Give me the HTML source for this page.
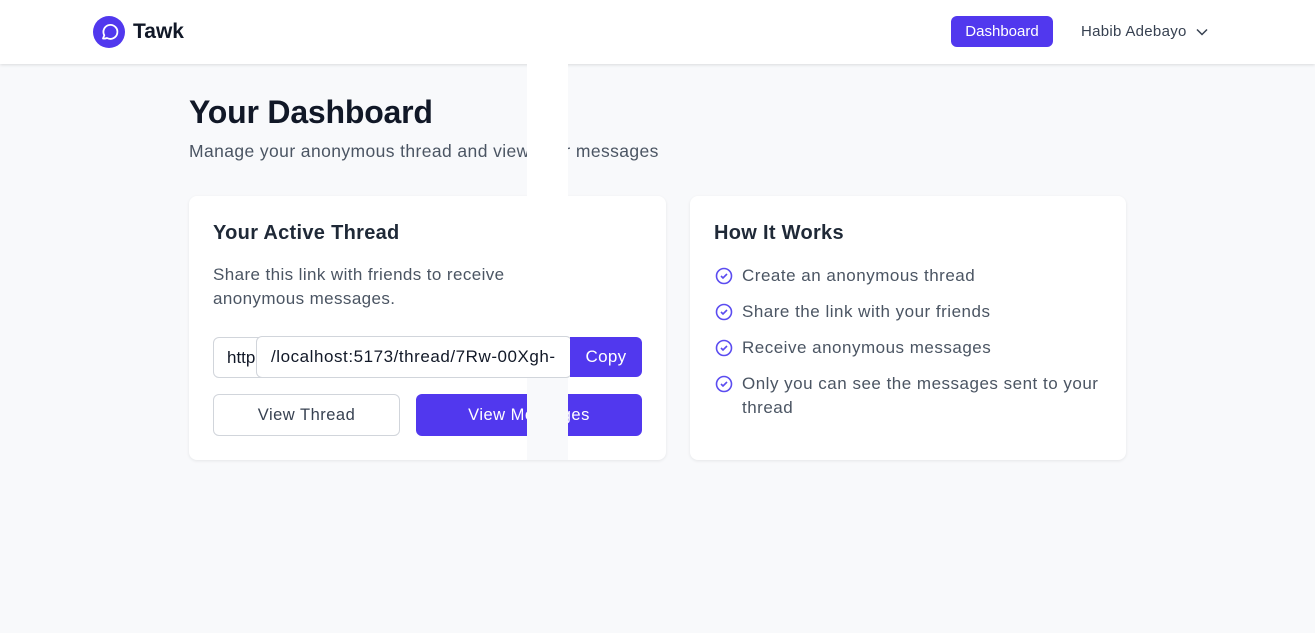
<!DOCTYPE html>
<html><head><style>
*{box-sizing:border-box;margin:0;padding:0}
body{width:1315px;height:633px;background:#f8f9fb;font-family:"Liberation Sans",sans-serif;position:relative;overflow:hidden;color:#111827}
.a{position:absolute}
.hdr{left:0;top:0;width:1315px;height:64px;background:#fff;box-shadow:0 1px 3px rgba(0,0,0,.12)}
.card{background:#fff;border-radius:8px;box-shadow:0 1px 3px rgba(0,0,0,.08)}
.btn{background:#5138ee;color:#fff;border-radius:6px;display:flex;align-items:center;justify-content:center}
.li{left:714px;font-size:17px;letter-spacing:.5px;color:#4b5563;display:flex;gap:8px;line-height:24px}
</style></head><body>
<div class="a hdr"></div>
<svg class="a" style="left:93px;top:16px" width="32" height="32" viewBox="0 0 32 32"><circle cx="16" cy="16" r="16" fill="#5138ee"/><path d="M10 22.5l1.3-3.2A7 7 0 1 1 14 22a7 7 0 0 1-4 .5z" fill="none" stroke="#fff" stroke-width="1.8" stroke-linejoin="round"/></svg>
<div class="a" style="left:133px;top:20px;font-size:21px;font-weight:bold">Tawk</div>
<div class="a btn" style="left:951px;top:16px;width:102px;height:31px;font-size:15px">Dashboard</div>
<div class="a" style="left:1081px;top:23px;font-size:15px;letter-spacing:.3px;color:#374151">Habib Adebayo</div>
<svg class="a" style="left:1196px;top:27px" width="12" height="10" viewBox="0 0 12 10"><path d="M1 2.5l5 5 5-5" fill="none" stroke="#374151" stroke-width="1.5"/></svg>
<div class="a" style="left:189px;top:94px;font-size:32px;font-weight:bold;letter-spacing:-.2px">Your Dashboard</div>
<div class="a" style="left:189px;top:141px;font-size:17.5px;letter-spacing:.4px;color:#4b5563">Manage your anonymous thread and view your messages</div>
<div class="a card" style="left:189px;top:196px;width:477px;height:264px"></div>
<div class="a card" style="left:690px;top:196px;width:436px;height:264px"></div>
<div class="a" style="left:213px;top:222px;font-size:20px;letter-spacing:.3px;font-weight:bold;color:#1f2937">Your Active Thread</div>
<div class="a" style="left:213px;top:263px;width:340px;font-size:17px;letter-spacing:.4px;line-height:24px;color:#4b5563">Share this link with friends to receive anonymous messages.</div>
<div class="a" style="left:213px;top:337px;width:60px;height:41px;border:1px solid #d1d5db;border-radius:6px;background:#fff;font-size:17px;padding:10px 0 0 13px;overflow:hidden">http</div>
<div class="a" style="left:256px;top:336px;width:316px;height:42px;border:1px solid #d1d5db;border-radius:6px;background:#fff;font-size:17px;letter-spacing:.55px;padding:10px 0 0 14px;white-space:nowrap;overflow:hidden">/localhost:5173/thread/7Rw-00Xgh-</div>
<div class="a btn" style="left:570px;top:337px;width:72px;height:40px;font-size:17px;letter-spacing:.3px;border-radius:0 6px 6px 0">Copy</div>
<div class="a" style="left:213px;top:394px;width:187px;height:42px;border:1px solid #d1d5db;border-radius:6px;background:#fff;font-size:16.5px;letter-spacing:.5px;color:#374151;display:flex;align-items:center;justify-content:center">View Thread</div>
<div class="a btn" style="left:416px;top:394px;width:226px;height:42px;font-size:16.5px;letter-spacing:.5px">View Messages</div>
<div class="a" style="left:527px;top:64px;width:41px;height:132px;background:#fff"></div>
<div class="a" style="left:527px;top:378px;width:41px;height:82px;background:#f8f9fb"></div>
<div class="a" style="left:714px;top:222px;font-size:20px;letter-spacing:.3px;font-weight:bold;color:#1f2937">How It Works</div>
<div class="a li" style="top:264px"><svg width="20" height="24" viewBox="0 0 20 24"><circle cx="10" cy="12" r="7.5" fill="none" stroke="#5b4cf0" stroke-width="1.6"/><path d="M7 12l2 2 4-4" fill="none" stroke="#5b4cf0" stroke-width="1.6"/></svg>Create an anonymous thread</div>
<div class="a li" style="top:300px"><svg width="20" height="24" viewBox="0 0 20 24"><circle cx="10" cy="12" r="7.5" fill="none" stroke="#5b4cf0" stroke-width="1.6"/><path d="M7 12l2 2 4-4" fill="none" stroke="#5b4cf0" stroke-width="1.6"/></svg>Share the link with your friends</div>
<div class="a li" style="top:336px"><svg width="20" height="24" viewBox="0 0 20 24"><circle cx="10" cy="12" r="7.5" fill="none" stroke="#5b4cf0" stroke-width="1.6"/><path d="M7 12l2 2 4-4" fill="none" stroke="#5b4cf0" stroke-width="1.6"/></svg>Receive anonymous messages</div>
<div class="a li" style="top:372px"><svg width="20" height="24" viewBox="0 0 20 24" style="flex:none"><circle cx="10" cy="12" r="7.5" fill="none" stroke="#5b4cf0" stroke-width="1.6"/><path d="M7 12l2 2 4-4" fill="none" stroke="#5b4cf0" stroke-width="1.6"/></svg><span style="width:370px">Only you can see the messages sent to your thread</span></div>
</body></html>
